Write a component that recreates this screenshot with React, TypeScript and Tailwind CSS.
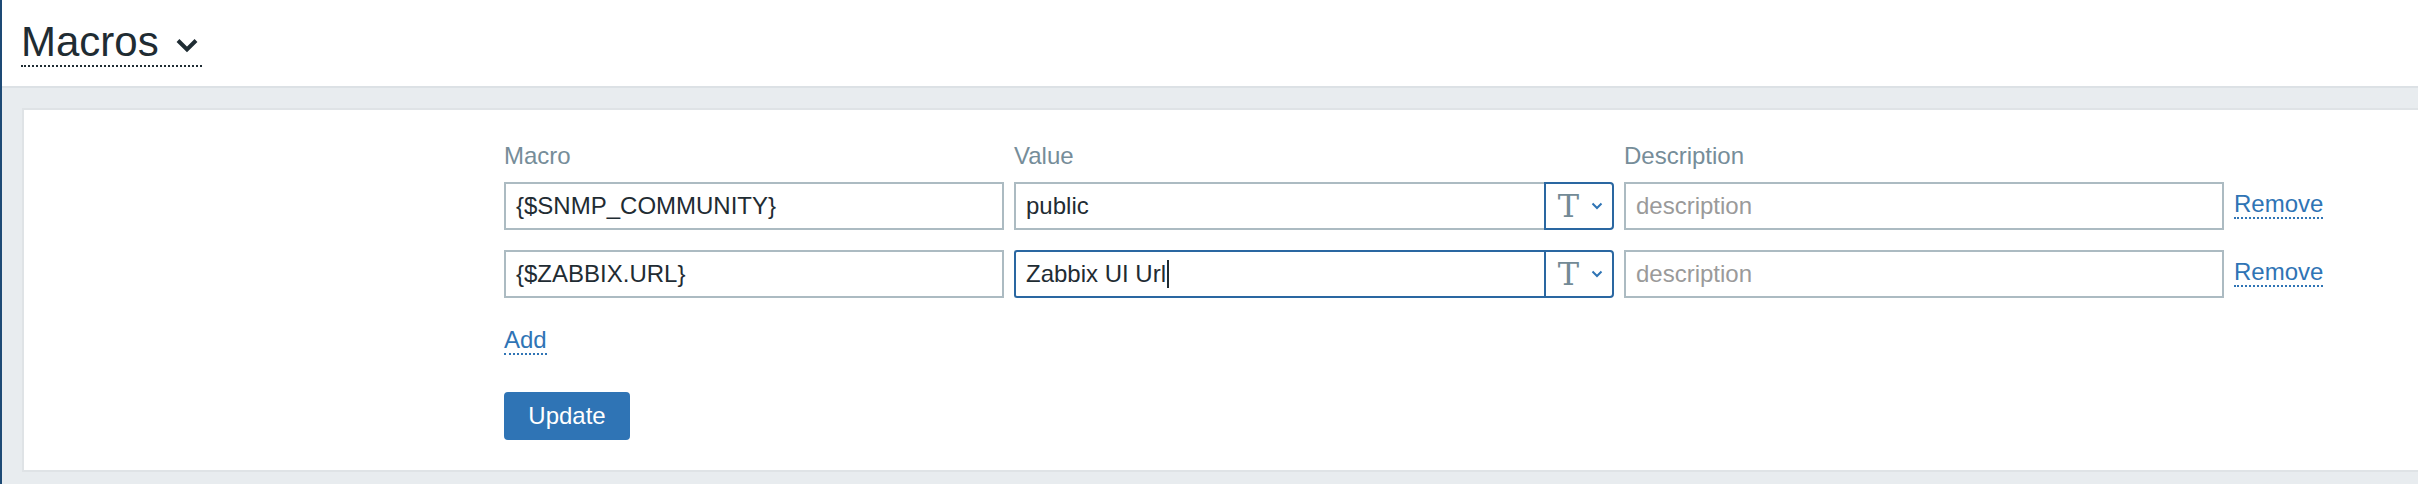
import React from 'react';

type Macro = {
  macro: string;
  value: string;
  focused: boolean;
};

const macros: Macro[] = [
  { macro: '{$SNMP_COMMUNITY}', value: 'public', focused: false },
  { macro: '{$ZABBIX.URL}', value: 'Zabbix UI Url', focused: true },
];

const TypeButton = () => (
  <div className="flex w-[70px] shrink-0 items-center rounded-r-[4px] border-2 border-[#2a67a1] bg-white pl-[10px]">
    <span
      className="w-[25px] text-center text-[32px] leading-none text-[#738a96]"
      style={{ fontFamily: '"DejaVu Serif", serif' }}
    >
      T
    </span>
    <svg width="12" height="8" viewBox="0 0 12 8" className="ml-[10px]">
      <polyline points="1.5,1.5 6,6 10.5,1.5" fill="none" stroke="#2f74b5" strokeWidth="2" />
    </svg>
  </div>
);

const MacroRow = ({ row }: { row: Macro }) => (
  <div className="flex gap-x-[10px]">
    <div className="flex h-[48px] w-[500px] items-center border-2 border-[#acbbc2] bg-white pl-[10px] text-[#1f2c33]">
      {row.macro}
    </div>

    <div className="flex h-[48px] w-[600px]">
      <div
        className={
          row.focused
            ? 'flex flex-1 items-center rounded-l-[3px] border-2 border-r-0 border-[#2a67a1] bg-white pl-[10px] text-[#1f2c33]'
            : 'flex flex-1 items-center border-2 border-r-0 border-[#acbbc2] bg-white pl-[10px] text-[#1f2c33]'
        }
      >
        <span>{row.value}</span>
        {row.focused && <span className="ml-[1px] h-[28px] w-[2px] bg-[#1f2c33]" />}
      </div>
      <TypeButton />
    </div>

    <div className="flex h-[48px] w-[600px] items-center border-2 border-[#acbbc2] bg-white pl-[10px] text-[#9a9a9a]">
      description
    </div>

    <div className="mt-[8px] flex self-start">
      <span className="cursor-pointer border-b-2 border-dotted border-[#2f74b5] leading-[27px] text-[#2f74b5]">
        Remove
      </span>
    </div>
  </div>
);

export default function App() {
  return (
    <div
      className="flex min-h-screen text-[24px]"
      style={{ fontFamily: '"Liberation Sans", Arial, sans-serif' }}
    >
      <div className="w-[2px] shrink-0 bg-[#1d4a75]" />

      <div className="flex flex-1 flex-col bg-[#e8ecef]">
        <div className="h-[88px] border-b-2 border-[#dce1e5] bg-white pl-[19px] pt-[18px]">
          <span className="inline-flex items-end border-b-2 border-dotted border-[#1f2c33] text-[42px] leading-[47px] text-[#1f2c33]">
            Macros
            <svg width="22" height="15" viewBox="0 0 22 15" className="mb-[12px] ml-[17px] mr-[4px]">
              <polyline points="2,2.5 11,11.5 20,2.5" fill="none" stroke="#1f2c33" strokeWidth="4" />
            </svg>
          </span>
        </div>

        <div className="pb-[20px] pl-[20px] pt-[20px]">
          <div className="border-2 border-r-0 border-[#dfe3e6] bg-white pb-[30px] pl-[480px] pt-[32px]">
            <div className="flex gap-x-[10px] leading-[28px] text-[#768d99]">
              <div className="w-[500px]">Macro</div>
              <div className="w-[600px]">Value</div>
              <div className="w-[600px]">Description</div>
            </div>

            <div className="mt-[12px] flex flex-col gap-y-[20px]">
              {macros.map((row) => (
                <MacroRow key={row.macro} row={row} />
              ))}
            </div>

            <div className="mt-[28px] flex">
              <span className="cursor-pointer border-b-2 border-dotted border-[#2f74b5] leading-[27px] text-[#2f74b5]">
                Add
              </span>
            </div>

            <button className="mt-[37px] block h-[48px] w-[126px] rounded-[4px] border-2 border-[#2f74b5] bg-[#2f74b5] leading-none text-white">
              Update
            </button>
          </div>
        </div>
      </div>
    </div>
  );
}
